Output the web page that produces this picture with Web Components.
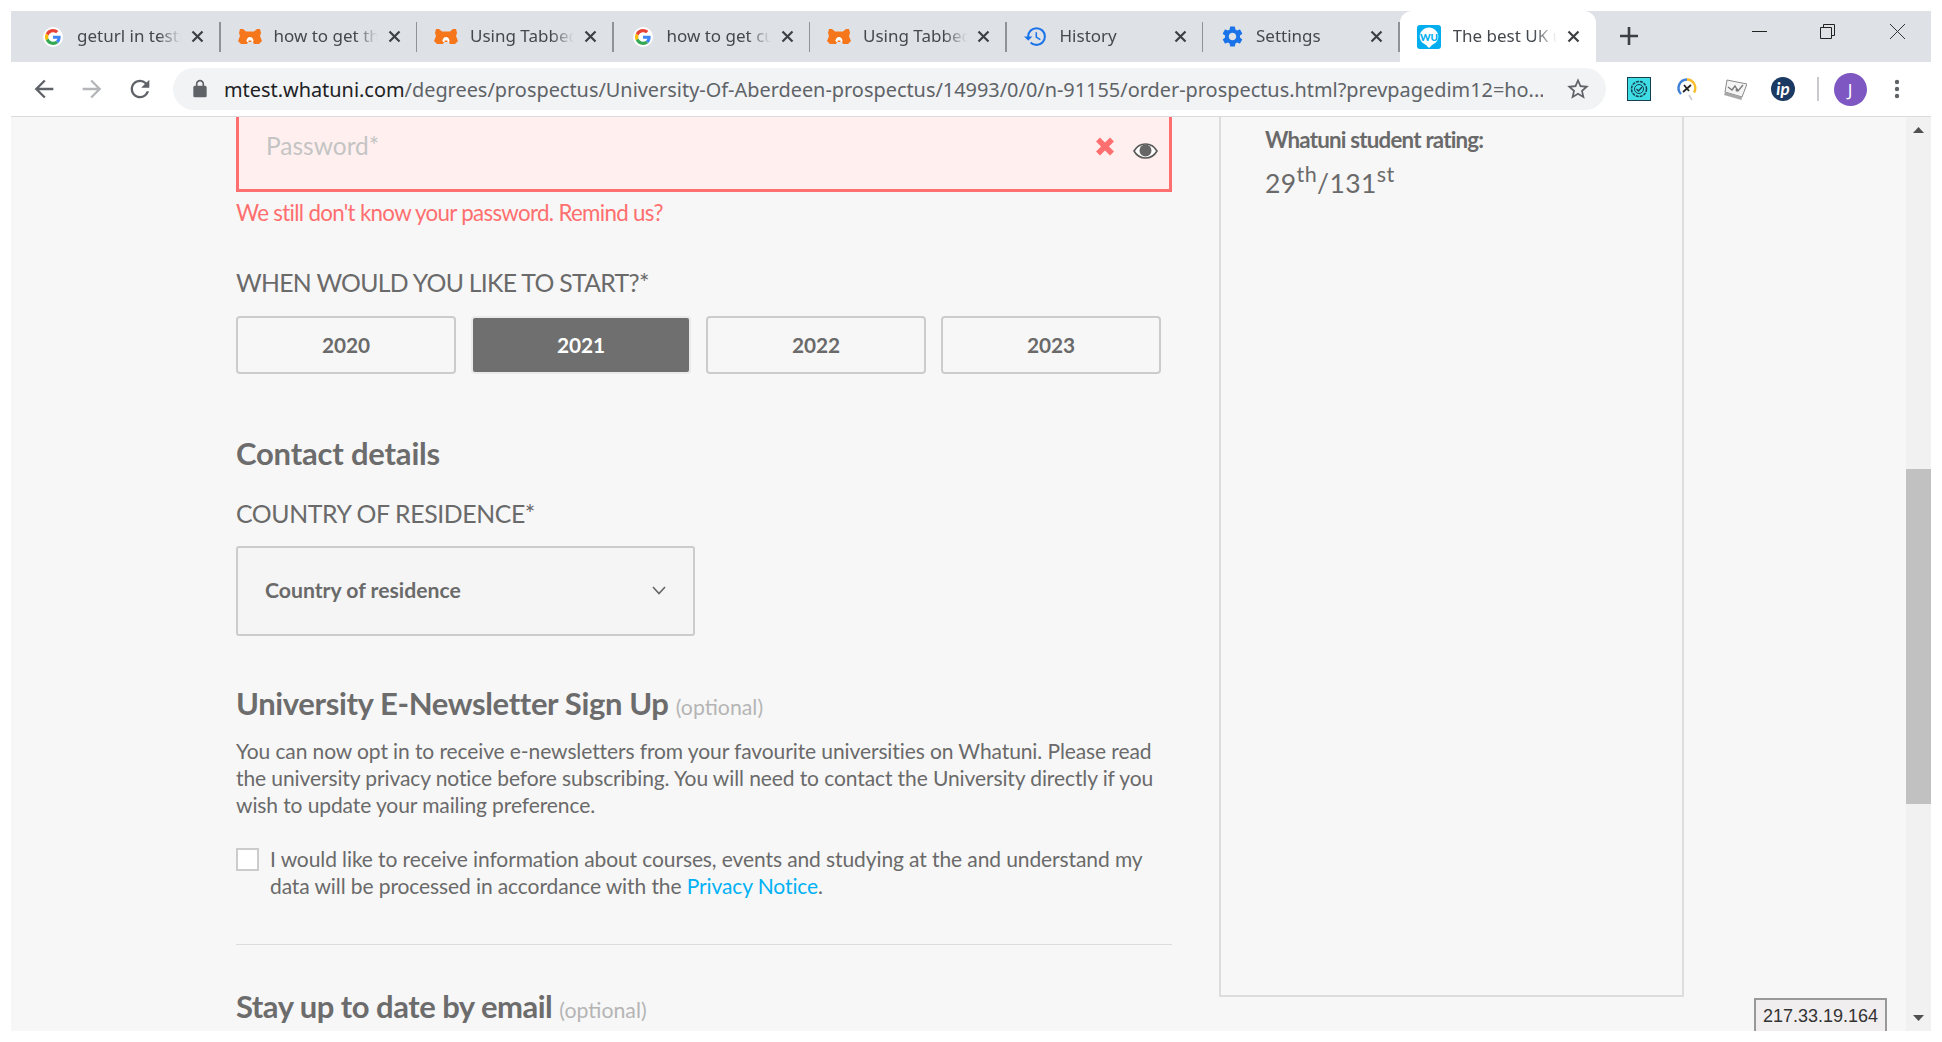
<!DOCTYPE html>
<html lang="en">
<head>
<meta charset="utf-8">
<title>Whatuni</title>
<style>
  html, body { margin: 0; height: 100%; background: #ffffff; overflow: hidden; }
  body { font-family: "Lato", "Liberation Sans", sans-serif; }
</style>
</head>
<body>
<app-window></app-window>

<script>
const ICONS = {
  google: `<svg width="20" height="20" viewBox="-6 -6 60 60"><circle cx="24" cy="24" r="30" fill="#fff"/><path fill="#EA4335" d="M24 9.5c3.54 0 6.71 1.22 9.21 3.6l6.85-6.85C35.9 2.38 30.47 0 24 0 14.62 0 6.51 5.38 2.56 13.22l7.98 6.19C12.43 13.72 17.74 9.5 24 9.5z"/><path fill="#4285F4" d="M46.98 24.55c0-1.57-.15-3.09-.38-4.55H24v9.02h12.94c-.58 2.96-2.26 5.48-4.78 7.18l7.73 6c4.51-4.18 7.09-10.36 7.09-17.65z"/><path fill="#FBBC05" d="M10.53 28.59c-.48-1.45-.76-2.99-.76-4.59s.27-3.14.76-4.59l-7.98-6.19C.92 16.46 0 20.12 0 24c0 3.88.92 7.54 2.56 10.78l7.97-6.19z"/><path fill="#34A853" d="M24 48c6.48 0 11.93-2.13 15.89-5.81l-7.73-6c-2.15 1.45-4.92 2.3-8.16 2.3-6.26 0-11.57-4.22-13.47-9.91l-7.98 6.19C6.51 42.62 14.62 48 24 48z"/></svg>`,
  fox: `<svg width="24" height="15" viewBox="0 0 24 15"><path fill="#f6761b" d="M2 0h3l3 2.500h8L19 0h3l1 4-1 3 2 5-3 3h-5l-1-2H10l-1 2H3l-3-3 2-5-1-3z"/><path fill="#fff" d="M12 8c2 0 3 1.500 3.500 3.500L15 13H9l-.5-1.500C9 9.500 10 8 12 8z"/><path fill="#f6761b" d="M10.500 11.500h3V13h-3z"/></svg>`,
  history: `<svg width="25" height="25" viewBox="0 0 24 24"><path fill="#1a73e8" d="M13 3a9 9 0 0 0-9 9H1l3.890 3.890.070.140L9 12H6c0-3.870 3.130-7 7-7s7 3.130 7 7-3.130 7-7 7c-1.930 0-3.680-.790-4.940-2.060l-1.420 1.420A8.954 8.954 0 0 0 13 21a9 9 0 0 0 0-18zm-1 5v5l4.280 2.540.720-1.210-3.500-2.080V8H12z"/></svg>`,
  gear: `<svg width="25" height="25" viewBox="0 0 24 24"><path fill="#1a73e8" d="M19.140 12.940c.040-.300.060-.610.060-.940 0-.320-.020-.640-.070-.940l2.030-1.580a.490.490 0 0 0 .120-.610l-1.920-3.320a.488.488 0 0 0-.590-.220l-2.390.960c-.500-.380-1.030-.700-1.620-.940l-.360-2.540a.484.484 0 0 0-.480-.410h-3.840c-.240 0-.430.170-.470.410l-.360 2.540c-.590.240-1.130.570-1.620.940l-2.390-.960c-.220-.080-.470 0-.590.220L2.740 8.870c-.120.210-.080.470.120.610l2.030 1.580c-.050.300-.090.630-.090.940s.020.640.070.940l-2.030 1.580a.490.490 0 0 0-.120.610l1.920 3.320c.120.220.370.290.590.220l2.390-.960c.500.380 1.030.700 1.620.940l.360 2.540c.050.240.240.410.480.410h3.840c.240 0 .440-.170.470-.410l.360-2.540c.590-.240 1.130-.560 1.620-.940l2.390.960c.220.080.470 0 .590-.220l1.920-3.320c.120-.220.070-.470-.120-.610l-2.010-1.580zM12 15.600c-1.980 0-3.600-1.620-3.600-3.600s1.620-3.600 3.600-3.600 3.600 1.620 3.600 3.600-1.620 3.600-3.600 3.600z"/></svg>`,
  wu: `<svg width="24" height="24" viewBox="0 0 24 24"><rect width="24" height="24" rx="3" fill="#00aeef"/><path fill="#fff" d="M12 2.500a9.500 9 0 0 1 3 17.500L12 23l-3-3A9.500 9 0 0 1 12 2.500z"/><text x="12" y="15.500" text-anchor="middle" font-family="Lato, sans-serif" font-weight="900" font-size="10" fill="#00aeef">WU</text></svg>`
};

class AppWindow extends HTMLElement {
  connectedCallback() {
    this.attachShadow({ mode: "open" }).innerHTML = `
    <style>
      :host { display: flex; flex-direction: column; height: 1020px; padding: 11px; box-sizing: content-box; width: 1920px; }
    </style>
    <tab-strip></tab-strip>
    <browser-toolbar></browser-toolbar>
    <page-view></page-view>`;
  }
}

class TabStrip extends HTMLElement {
  connectedCallback() {
    const tabs = [
      ["google", "geturl in testng"],
      ["fox", "how to get the"],
      ["fox", "Using Tabbed Pages"],
      ["google", "how to get current"],
      ["fox", "Using Tabbed Pages"],
      ["history", "History"],
      ["gear", "Settings"],
      ["wu", "The best UK universities", "active"]
    ];
    this.attachShadow({ mode: "open" }).innerHTML = `
    <style>
      :host { display: flex; height: 51px; background: #dee1e6; padding-left: 13px; flex: none; position: relative; }
      .plus { width: 18px; height: 18px; margin: 16px 0 0 24px; }
      .win { display: flex; margin-left: auto; padding-right: 3px; }
      .win div { width: 68px; display: flex; justify-content: center; padding-top: 13px; height: 16px; }
    </style>
    ${tabs.map(t => `<browser-tab icon="${t[0]}" label="${t[1]}" ${t[2] ? "active" : ""}></browser-tab>`).join("")}
    <svg class="plus" viewBox="0 0 18 18"><path d="M9 0v18M0 9h18" stroke="#3c4043" stroke-width="2.600"/></svg>
    <div class="win">
      <div><svg width="15" height="15" viewBox="0 0 15 15"><path d="M0 7.500h15" stroke="#222" stroke-width="1"/></svg></div>
      <div><svg width="15" height="15" viewBox="0 0 15 15"><path d="M.5 3.500h11v11H.5zM3.500 3.500V.5h11v11h-3" fill="none" stroke="#222" stroke-width="1"/></svg></div>
      <div style="width:62px;margin-left:5px"><svg width="15" height="15" viewBox="0 0 15 15"><path d="M0 0l15 15M15 0L0 15" stroke="#333" stroke-width="1"/></svg></div>
    </div>`;
  }
}

class BrowserTab extends HTMLElement {
  connectedCallback() {
    const icon = this.getAttribute("icon");
    this.attachShadow({ mode: "open" }).innerHTML = `
    <style>
      :host { display: flex; align-items: center; width: 196.500px; height: 51px; position: relative; box-sizing: border-box; flex: none; color: #45484c; font: 17px "Noto Sans", sans-serif; }
      :host(:not([active]))::after { content: ""; position: absolute; right: 0; top: 11px; height: 30px; width: 1.500px; background: #8f9296; }
      :host([active]) { background: #fff; border-radius: 12px 12px 0 0; }
      .ic { width: 53px; flex: none; display: flex; justify-content: center; padding-left: 5px; box-sizing: border-box; }
      .txt { width: 104px; white-space: nowrap; overflow: hidden; flex: none; padding-bottom: 2px; -webkit-mask-image: linear-gradient(90deg, #000 78%, transparent); mask-image: linear-gradient(90deg, #000 78%, transparent); }
      .x { margin-left: 10px; }
    </style>
    <span class="ic">${ICONS[icon]}</span>
    <span class="txt">${this.getAttribute("label")}</span>
    <svg class="x" width="13" height="13" viewBox="0 0 13 13"><path d="M1.500 1.500l10 10M11.500 1.500l-10 10" stroke="#3c4043" stroke-width="2.200"/></svg>`;
  }
}

class BrowserToolbar extends HTMLElement {
  connectedCallback() {
    this.attachShadow({ mode: "open" }).innerHTML = `
    <style>
      :host { display: flex; align-items: center; background: #fff; border-bottom: 1px solid #dadce0; box-sizing: content-box; flex: none; height: 54px; }
      .nav { display: flex; width: 162px; padding-left: 19px; gap: 20px; box-sizing: border-box; flex: none; }
      .url { flex: none; width: 1433px; height: 42px; background: #f1f3f4; border-radius: 21px; display: flex; align-items: center; box-sizing: border-box; }
      .lock { margin: 0 14px 0 17px; flex: none; }
      .addr { font: 19.900px "Noto Sans", sans-serif; color: #5f6368; white-space: nowrap; width: 1319px; overflow: hidden; flex: none; }
      .addr b { font-weight: 400; color: #202124; }
      .star { margin-left: 22px; flex: none; }
      .ext { display: flex; align-items: center; margin-left: 21px; gap: 24px; }
      .sep { width: 1.500px; height: 24px; background: #c8cacd; margin: 0 15px 0 22px; }
      .avatar { width: 33px; height: 33px; border-radius: 50%; background: #7e57c2; color: #fff; font: 17px "Noto Sans", sans-serif; display: flex; align-items: center; justify-content: center; flex: none; }
      .more { margin-left: 27px; }
    </style>
    <div class="nav">
      <svg width="28" height="28" viewBox="0 0 24 24"><path fill="#5f6368" d="M20 11H7.830l5.590-5.590L12 4l-8 8 8 8 1.410-1.410L7.830 13H20v-2z"/></svg>
      <svg width="28" height="28" viewBox="0 0 24 24"><path fill="#b4b6b9" d="M4 13h12.170l-5.590 5.590L12 20l8-8-8-8-1.410 1.410L16.170 11H4v2z"/></svg>
      <svg width="28" height="28" viewBox="0 0 24 24"><path fill="#5f6368" d="M17.650 6.350A7.958 7.958 0 0 0 12 4c-4.420 0-7.990 3.580-7.990 8s3.570 8 7.990 8c3.730 0 6.840-2.550 7.730-6h-2.080A5.990 5.990 0 0 1 12 18c-3.310 0-6-2.690-6-6s2.690-6 6-6c1.660 0 3.140.690 4.220 1.780L13 11h7V4l-2.350 2.350z"/></svg>
    </div>
    <div class="url">
      <svg class="lock" width="20" height="20" viewBox="0 0 24 24"><path fill="#5f6368" d="M18 8h-1V6c0-2.760-2.240-5-5-5S7 3.240 7 6v2H6c-1.100 0-2 .9-2 2v10c0 1.100.9 2 2 2h12c1.100 0 2-.9 2-2V10c0-1.100-.9-2-2-2zM9 6c0-1.660 1.340-3 3-3s3 1.340 3 3v2H9V6z"/></svg>
      <span class="addr"><b>mtest.whatuni.com</b>/degrees/prospectus/University-Of-Aberdeen-prospectus/14993/0/0/n-91155/order-prospectus.html?prevpagedim12=ho...</span>
      <svg class="star" width="26" height="26" viewBox="0 0 24 24"><path fill="#5f6368" d="M22 9.240l-7.190-.62L12 2 9.190 8.630 2 9.240l5.460 4.730L5.820 21 12 17.270 18.180 21l-1.630-7.030L22 9.240zM12 15.400l-3.760 2.270 1-4.280-3.320-2.880 4.380-.38L12 6.100l1.710 4.040 4.380.38-3.320 2.880 1 4.280L12 15.400z"/></svg>
    </div>
    <div class="ext">
      <svg width="24" height="24" viewBox="0 0 24 24"><rect x=".5" y=".5" width="23" height="23" fill="#3fdde6" stroke="#17404f"/><circle cx="12" cy="12" r="7.500" fill="none" stroke="#17404f" stroke-width="1.500" stroke-dasharray="3 1"/><circle cx="12" cy="12" r="4.500" fill="none" stroke="#17404f" stroke-width="1"/><path d="M9.500 12l2 2 3.500-4" fill="none" stroke="#17404f" stroke-width="1.300"/></svg>
      <svg width="24" height="24" viewBox="0 0 24 24"><path d="M12 2.500a8.500 8.500 0 0 1 7 13" fill="none" stroke="#fbbc2c" stroke-width="2.400"/><path d="M12 2.500a8.500 8.500 0 0 0-6 14.500" fill="none" stroke="#3f7fd6" stroke-width="2.400"/><path d="M8 15l8-7M9 8l5 6" stroke="#222" stroke-width="1.800"/><path d="M14 18l3 5" stroke="#c8c8d0" stroke-width="1.500"/></svg>
      <svg width="24" height="24" viewBox="0 0 24 24"><path d="M4 3l20 4-5 13-17-5z" fill="#f4f4f4" stroke="#8a8a8a"/><path d="M2 15l17 5-.5 3L1 18z" fill="#a8a8a8"/><path d="M5 10l4 3 3-4 3 5 5-6" fill="none" stroke="#777" stroke-width="1.300"/><circle cx="14" cy="13" r="1.500" fill="#777"/></svg>
      <svg width="24" height="24" viewBox="0 0 24 24"><circle cx="12" cy="12" r="12" fill="#1b3a63"/><text x="12" y="17.500" text-anchor="middle" font-family="Lato, sans-serif" font-style="italic" font-weight="700" font-size="17" fill="#fff">ip</text></svg>
    </div>
    <div class="sep"></div>
    <div class="avatar">J</div>
    <svg class="more" width="6" height="20" viewBox="0 0 6 20"><circle cx="3" cy="3" r="2.200" fill="#5f6368"/><circle cx="3" cy="10" r="2.200" fill="#5f6368"/><circle cx="3" cy="17" r="2.200" fill="#5f6368"/></svg>`;
  }
}

class PageView extends HTMLElement {
  connectedCallback() {
    this.attachShadow({ mode: "open" }).innerHTML = `
    <style>
      :host { display: flex; height: 914px; background: #f7f7f7; position: relative; overflow: hidden; flex: none; }
      .main { flex: 1; display: flex; align-items: flex-start; padding-left: 225px; gap: 47px; min-width: 0; }
      .badge { position: absolute; right: 44px; bottom: 0; height: 33px; width: 133px; box-sizing: border-box; border: 2px solid #999; border-bottom: 0; background: #f0eeee; color: #333; font: 18px/32px "Liberation Sans", sans-serif; text-align: center; }
    </style>
    <div class="main">
      <prospectus-form></prospectus-form>
      <rating-panel></rating-panel>
    </div>
    <page-scrollbar></page-scrollbar>
    <div class="badge">217.33.19.164</div>`;
  }
}

class ProspectusForm extends HTMLElement {
  connectedCallback() {
    this.attachShadow({ mode: "open" }).innerHTML = `
    <style>
      :host { display: block; width: 936px; flex: none; color: #6a6a6a; font-family: "Lato", sans-serif; }
      .pw { height: 75px; box-sizing: border-box; background: #fff0ef; border: 3px solid #ff6f6f; border-top: 0; display: flex; padding-left: 27px; position: relative; }
      .ph { font-size: 24.500px; line-height: 30px; margin-top: 14px; color: #c4c4c4; }
      .pw svg { position: absolute; }
      .err { color: #ff6f6f; font-size: 22.300px; line-height: 27px; margin-top: 7px; letter-spacing: -.68px; }
      .lbl { font-size: 24.800px; line-height: 28px; letter-spacing: -.7px; color: #6a6a6a; }
      .years { display: flex; gap: 15px; margin-top: 19px; width: 925px; }
      h2 { font-size: 31px; line-height: 36px; font-weight: 700; margin: 0; color: #6c6c6c; }
      h2 small { font-size: 21.300px; font-weight: 400; color: #b5b5b5; letter-spacing: 0; }
      .sel { width: 459px; height: 90px; box-sizing: border-box; border: 2px solid #ccc; border-radius: 3px; background: #f5f5f5; display: flex; align-items: center; justify-content: space-between; padding: 0 27px 2px 27px; font-weight: 700; font-size: 21.200px; }
      .sel svg { margin-top: 2px; }
      p { font-size: 21px; line-height: 27px; margin: 0; letter-spacing: -.1px; color: #6a6a6a; }
      .chk { display: flex; gap: 11px; margin-top: 27px; }
      .box { width: 23px; height: 23px; box-sizing: border-box; border: 2px solid #ccc; background: #fff; flex: none; margin-top: 3px; }
      a { color: #00b1f5; text-decoration: none; }
      hr { border: 0; border-top: 1.500px solid #dcdcdc; margin: 45px 0 0; }
    </style>
    <div class="pw">
      <span class="ph">Password*</span>
      <svg style="left:856px;top:20px" width="20" height="19" viewBox="0 0 20 19"><path d="M3 2.500l14 14M17 2.500L3 16.500" stroke="#ff6f6f" stroke-width="5.500"/></svg>
      <svg style="left:894px;top:26px" width="25" height="16" viewBox="0 0 25 16"><path d="M12.500 1C7 1 3 4.500 1 8c2 3.500 6 7 11.500 7S22 11.500 24 8c-2-3.500-6-7-11.500-7z" fill="#fff" stroke="#5a5a5a" stroke-width="1.600"/><circle cx="12.500" cy="7.500" r="6" fill="#666"/></svg>
    </div>
    <div class="err">We still don't know your password. Remind us?</div>
    <div class="lbl" style="margin-top:43px">WHEN WOULD YOU LIKE TO START?*</div>
    <div class="years">
      <year-button>2020</year-button>
      <year-button selected>2021</year-button>
      <year-button>2022</year-button>
      <year-button>2023</year-button>
    </div>
    <h2 style="margin-top:61px;letter-spacing:-.2px">Contact details</h2>
    <div class="lbl" style="margin-top:28.500px;letter-spacing:-.38px">COUNTRY OF RESIDENCE*</div>
    <div class="sel" style="margin-top:18px">
      <span>Country of residence</span>
      <svg width="14" height="9" viewBox="0 0 14 9"><path d="M1 1l6 6.500L13 1" fill="none" stroke="#666" stroke-width="1.600"/></svg>
    </div>
    <h2 style="margin-top:49.500px;letter-spacing:-.36px">University E-Newsletter Sign Up <small>(optional)</small></h2>
    <p style="margin-top:12px">You can now opt in to receive e-newsletters from your favourite universities on Whatuni. Please read the university privacy notice before subscribing. You will need to contact the University directly if you wish to update your mailing preference.</p>
    <div class="chk">
      <span class="box"></span>
      <p>I would like to receive information about courses, events and studying at the and understand my data will be processed in accordance with the <a>Privacy Notice</a>.</p>
    </div>
    <hr>
    <h2 style="margin-top:43px;letter-spacing:-.5px">Stay up to date by email <small>(optional)</small></h2>`;
  }
}

class YearButton extends HTMLElement {
  connectedCallback() {
    this.attachShadow({ mode: "open" }).innerHTML = `
    <style>
      :host { display: flex; align-items: center; justify-content: center; width: 220px; height: 58px; box-sizing: border-box; border: 2px solid #ccc; border-radius: 4px; padding-bottom: 2px; font-weight: 700; font-size: 20.800px; color: #6a6a6a; flex: none; }
      :host([selected]) { background: #6f6f6f; color: #fff; border-color: #eaeaea; }
    </style>
    <slot></slot>`;
  }
}

class RatingPanel extends HTMLElement {
  connectedCallback() {
    this.attachShadow({ mode: "open" }).innerHTML = `
    <style>
      :host { display: block; width: 465px; height: 880px; box-sizing: border-box; border: 2px solid #ddd; border-top: 0; padding: 10px 0 0 44px; flex: none; color: #6a6a6a; font-family: "Lato", sans-serif; }
      .t { font-weight: 700; font-size: 22.300px; line-height: 26px; letter-spacing: -.78px; }
      .v { font-size: 26.500px; line-height: 32px; margin-top: 14px; letter-spacing: .4px; }
      sup { font-size: 21.500px; line-height: 0; vertical-align: 11px; }
    </style>
    <div class="t">Whatuni student rating:</div>
    <div class="v">29<sup>th</sup>/131<sup>st</sup></div>`;
  }
}

class PageScrollbar extends HTMLElement {
  connectedCallback() {
    this.attachShadow({ mode: "open" }).innerHTML = `
    <style>
      :host { display: flex; flex-direction: column; width: 25px; background: #f1f1f1; flex: none; align-items: center; }
      .thumb { width: 100%; height: 335px; background: #c1c1c1; margin-top: 336px; }
      svg { flex: none; }
      .up { margin-top: 10px; }
      .down { margin-top: auto; margin-bottom: 10px; }
    </style>
    <svg class="up" width="11" height="6" viewBox="0 0 11 6"><path d="M5.500 0L11 6H0z" fill="#505050"/></svg>
    <div class="thumb"></div>
    <svg class="down" width="11" height="6" viewBox="0 0 11 6"><path d="M5.500 6L11 0H0z" fill="#505050"/></svg>`;
  }
}

customElements.define("app-window", AppWindow);
customElements.define("tab-strip", TabStrip);
customElements.define("browser-tab", BrowserTab);
customElements.define("browser-toolbar", BrowserToolbar);
customElements.define("page-view", PageView);
customElements.define("prospectus-form", ProspectusForm);
customElements.define("year-button", YearButton);
customElements.define("rating-panel", RatingPanel);
customElements.define("page-scrollbar", PageScrollbar);
</script>
</body>
</html>
